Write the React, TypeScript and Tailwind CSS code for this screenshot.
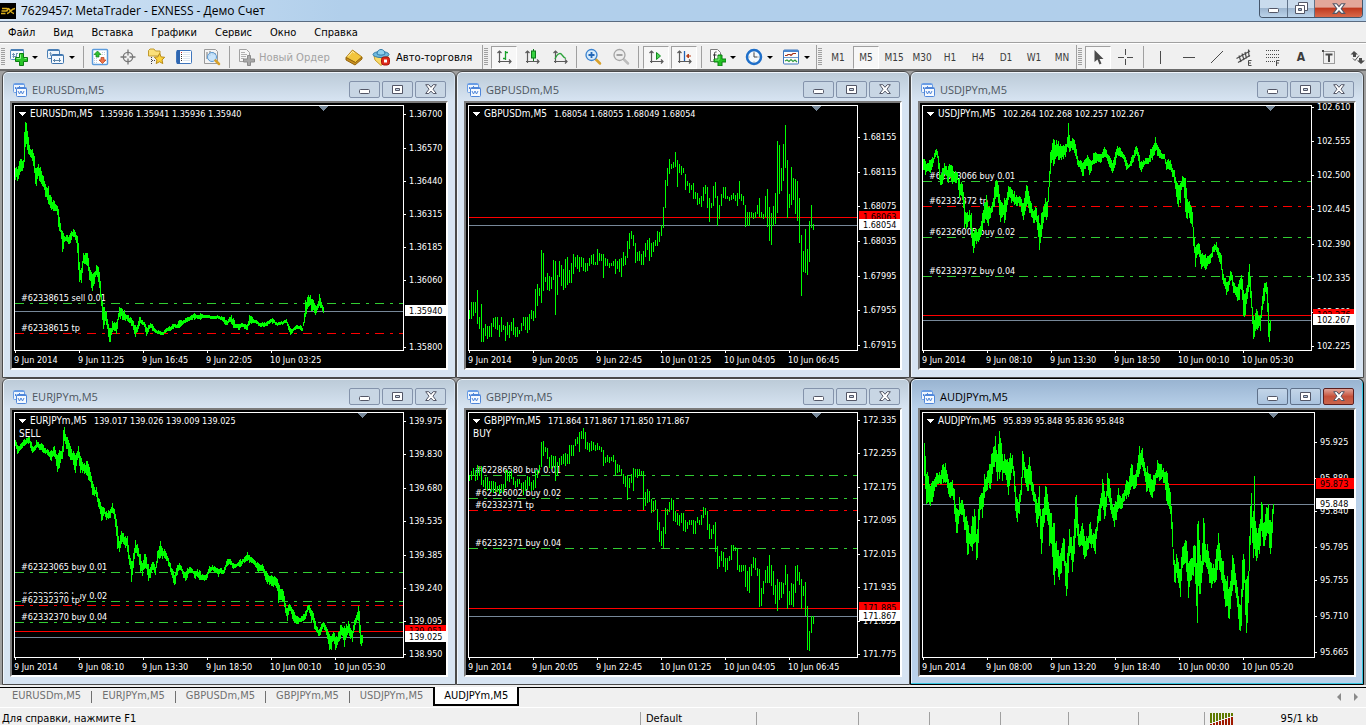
import React from 'react';

type Order = { y: number; text: string; kind: 'open' | 'tp'; cover?: boolean };
type Tag = { y: number; text: string };

interface Chart {
  symbol: string;
  quotes: string;
  signal?: string;
  active?: boolean;
  dense: boolean;
  // where the series data starts counting from, in pixels
  origin: [number, number];
  right?: number;
  marker: number;
  ticks: [number, string][];
  dates: string[];
  orders: Order[];
  ask?: Tag;
  bid: Tag;
  series: string;
}

// Series values are stored in thirds of a pixel.
// Sparse charts: "high,low" every 2px. Dense charts: "x,high,low" key bars.
const SCALE = 3;

const EURUSD = `45,293,330 52,296,332 59,267,305 65,274,305 70,270,290 71,195,290 76,148,215 82,190,245 88,232,256 95,236,266 101,250,300 107,296,356 113,282,315 119,285,335 125,315,348 131,318,350 134,340,378 143,345,400 151,380,417 160,390,425 163,400,430 170,405,425 174,418,470 181,465,490 187,485,557 191,500,515 200,495,515 206,497,525 212,485,512 218,474,500 224,485,505 230,490,530 234,520,600 238,590,648 243,595,640 248,550,580 255,549,582 263,555,595 267,590,630 275,612,665 283,605,640 289,580,610 294,590,635 300,632,680 304,680,720 308,710,782 313,710,760 318,722,765 322,740,790 326,775,818 331,775,815 337,750,780 343,757,785 349,755,795 353,735,755 357,711,740 365,717,750 373,722,750 380,735,752 390,740,760 398,750,775 404,765,805 411,765,785 418,738,765 425,750,765 432,757,770 438,770,798 445,765,785 451,758,770 457,764,785 464,778,790 473,780,792 486,785,795 495,776,788 505,770,783 517,760,778 530,765,772 535,750,776 547,752,765 555,743,758 565,742,752 575,735,750 581,727,750 590,735,745 600,730,750 612,736,743 625,735,745 640,738,744 652,736,745 665,740,750 673,742,765 680,755,765 687,740,755 693,736,762 702,750,775 708,763,775 716,762,783 724,758,770 731,762,775 740,765,782 747,735,765 752,738,762 760,748,760 770,752,762 778,760,770 790,758,770 800,755,768 810,748,760 817,742,762 824,755,762 833,757,764 850,752,760 858,746,760 864,762,780 869,775,796 876,776,790 881,772,781 890,764,778 896,768,776 902,765,782 907,775,782 910,740,770 915,690,740 920,682,720 925,675,710 929,672,700 934,690,730 939,690,720 944,705,738 952,700,716 958,667,708 963,695,715 969,712,730`;

const USDJPY = `45,268,300 49,270,310 52,280,318 55,280,298 61,278,305 66,270,308 72,262,290 76,260,275 80,240,262 85,237,255 89,250,285 93,280,330 97,315,348 103,290,340 107,278,310 115,290,320 119,290,342 125,284,315 131,287,342 140,303,342 147,310,330 152,322,385 158,335,375 163,345,395 168,390,475 173,430,480 178,425,470 184,418,450 189,430,500 194,490,555 199,480,530 205,478,520 212,478,512 217,465,500 222,430,480 228,400,460 234,376,450 240,410,468 246,415,445 252,395,425 258,350,410 265,325,375 270,345,400 275,390,460 282,400,440 289,382,463 295,385,420 300,347,390 305,350,378 310,358,405 317,362,405 323,375,410 332,375,405 338,385,420 344,405,455 349,380,430 353,342,410 358,350,400 363,378,430 369,398,440 377,420,460 384,413,455 390,435,500 394,470,545 399,430,500 405,410,460 409,380,445 415,400,450 419,370,420 422,310,390 425,250,320 431,220,268 437,210,285 444,210,260 451,215,272 458,228,270 464,225,268 470,225,262 476,215,250 479,148,230 484,205,250 491,205,240 497,206,245 502,225,262 507,258,285 515,270,295 523,280,320 530,270,298 536,252,285 544,270,318 550,272,300 556,245,280 562,246,278 570,252,276 580,252,276 587,228,260 595,240,265 602,255,290 608,268,303 614,275,305 621,245,285 627,228,255 634,232,258 642,245,265 650,256,285 655,275,305 662,285,290 668,262,290 675,255,275 680,230,260 686,230,252 692,250,290 698,275,307 705,270,290 713,265,283 720,265,282 725,238,275 731,232,272 737,225,258 742,196,240 746,222,256 752,235,262 760,250,268 768,252,268 774,275,300 780,268,298 786,270,300 792,293,320 798,300,340 803,330,375 810,345,412 816,340,400 820,325,360 826,320,350 831,325,425 836,388,447 842,390,440 846,405,460 852,425,470 856,480,550 861,530,590 866,522,555 873,522,560 878,550,600 885,555,588 892,552,602 898,560,585 905,555,583 912,530,560 917,525,545 923,513,543 929,530,560 933,545,575 939,555,600 943,610,645 950,620,650 955,640,683 961,630,660 965,604,635 970,605,630 975,635,670 982,650,675 988,650,698 993,630,690 998,612,650 1003,630,700 1006,680,752 1012,665,730 1018,640,680 1021,570,660 1026,620,685 1031,680,740 1034,740,812 1040,735,785 1045,712,775 1050,735,775 1056,735,782 1060,700,745 1064,660,705 1069,635,690 1073,630,655 1077,650,725 1080,700,800 1083,760,815 1087,750,770`;

const EURJPY = `45,192,210 50,205,234 56,212,225 62,202,220 70,192,210 77,188,205 87,182,200 92,195,225 97,212,232 103,210,225 108,193,215 113,198,215 120,203,222 127,205,228 134,215,232 142,220,236 152,225,257 158,212,240 163,210,245 170,240,288 176,222,280 180,225,260 186,210,250 188,165,240 192,153,195 197,180,215 203,190,240 208,205,245 214,220,255 220,225,270 224,240,300 229,230,262 234,210,245 239,235,290 245,258,290 251,262,294 257,253,295 265,265,315 272,295,330 277,320,362 283,335,360 289,333,365 295,372,400 299,375,405 304,395,444 310,392,415 317,405,432 324,402,430 330,400,425 335,380,410 341,393,420 346,418,460 351,450,518 356,500,533 362,465,505 368,468,500 374,480,515 380,472,520 385,515,555 390,545,580 394,560,626 399,530,575 405,492,530 409,500,540 415,520,545 420,535,588 426,560,600 431,533,580 437,540,570 443,560,615 449,575,610 454,560,585 461,560,590 466,575,600 471,525,560 476,515,550 480,495,545 485,515,550 492,518,545 498,530,555 504,545,570 511,565,590 518,580,618 523,600,630 530,570,600 536,560,580 543,570,585 548,585,605 555,588,615 562,573,603 569,573,590 577,580,592 583,585,610 590,580,603 598,583,612 606,595,612 613,598,616 620,590,608 627,570,590 636,567,582 643,570,590 654,580,602 660,575,592 668,583,595 673,572,585 680,548,570 690,550,568 698,560,578 706,563,575 713,560,570 719,550,575 726,550,565 733,543,560 742,525,553 748,540,562 755,545,560 763,553,567 772,560,588 780,568,585 787,563,585 794,585,608 800,590,625 806,600,625 812,595,630 818,602,632 824,603,630 830,605,635 834,620,680 839,640,672 846,640,675 851,655,685 855,680,712 860,700,740 865,685,712 871,688,705 877,700,735 884,715,742 892,722,744 900,725,738 908,715,735 915,705,728 920,690,710 926,684,705 932,700,738 938,708,735 943,730,765 950,750,770 956,762,783 962,745,770 968,738,752 974,745,762 980,758,785 987,775,822 993,780,822 998,765,790 1006,785,825 1013,772,800 1020,748,790 1026,752,780 1033,750,818 1038,745,785 1045,732,770 1050,755,790 1056,765,797 1061,735,765 1067,720,740 1074,690,735 1077,705,770 1081,765,820 1087,780,798`;

const AUDJPY = `48,200,300 51,240,340 54,295,385 58,290,370 63,325,385 68,320,380 74,318,370 79,305,340 86,290,325 92,290,320 98,285,325 104,264,322 111,262,320 117,295,335 122,320,365 128,318,360 133,312,360 139,345,425 143,395,470 148,400,470 153,362,420 158,370,415 164,378,430 169,405,470 174,420,500 179,440,545 183,470,505 188,458,508 192,420,525 198,400,500 203,440,545 206,480,560 210,400,500 214,325,425 219,352,400 223,350,437 228,295,365 233,310,345 238,278,340 243,265,335 248,240,330 254,212,275 259,210,272 262,178,265 267,235,315 273,165,310 278,190,270 283,245,325 287,230,290 293,250,300 299,262,365 305,230,320 311,230,270 317,270,330 321,330,405 326,370,443 332,360,420 338,330,375 343,200,290 347,255,300 353,280,330 358,280,350 363,243,325 369,285,345 374,320,370 380,345,400 386,390,460 393,330,420 397,400,533 402,400,500 407,375,450 412,318,410 418,360,440 423,400,510 428,398,490 433,465,555 438,440,626 443,490,570 449,518,600 454,545,615 459,515,590 464,484,550 468,490,570 473,570,665 477,530,640 483,460,540 488,475,540 492,510,587 497,450,550 502,342,470 506,375,470 511,460,518 517,465,510 522,440,510 528,480,548 534,480,540 540,480,520 545,430,500 549,460,515 555,470,515 561,460,533 565,430,495 570,400,440 577,360,435 583,298,380 588,345,430 592,360,420 597,290,360 602,300,370 607,345,410 613,390,430 619,385,458 625,375,425 631,328,395 637,365,400 643,350,395 649,340,370 655,305,370 661,320,360 667,268,340 672,268,330 677,300,340 683,290,335 689,245,305 694,200,290 698,225,265 703,215,275 708,258,300 713,295,350 718,262,345 722,290,345 730,310,365 737,300,350 742,290,320 747,252,305 753,265,315 759,265,310 765,275,320 770,290,330 775,282,385 780,320,390 785,335,400 789,390,460 793,450,545 796,535,615 800,575,630 804,535,590 809,550,610 815,590,680 820,530,600 826,505,560 831,492,560 836,512,600 840,560,665 845,550,615 850,545,610 855,510,600 860,492,600 864,560,690 867,445,740 871,455,640 875,530,665 880,560,610 886,400,560 891,505,560 897,505,580 903,545,620 909,560,635 914,565,615 920,560,620 925,510,610 929,462,545 934,510,590 940,552,615 946,555,650 951,610,692 957,600,690 962,640,740 967,610,690 971,535,650 976,550,620 981,590,650 986,622,680 990,660,730 994,700,806 999,640,750 1003,535,650 1008,550,620 1013,610,780 1017,600,740 1022,540,640 1025,400,560 1028,315,460 1031,390,480 1034,440,555 1038,300,520 1042,430,560 1047,470,545 1052,450,540 1056,430,510 1060,360,490 1065,440,510 1070,420,495 1075,385,475 1080,385,475 1084,430,535 1088,450,530 1092,400,470 1095,385,415`;

const GBPUSD = `720,747 696,747 696,738 696,729 660,762 741,777 702,816 774,816 762,798 768,807 768,801 759,801 744,771 741,777 741,780 765,801 741,786 765,780 768,813 756,795 765,804 756,783 744,795 771,801 771,801 780,792 759,783 741,768 741,780 741,789 732,780 720,747 723,753 657,744 642,708 654,678 540,699 549,663 621,636 609,660 618,663 621,657 570,630 573,735 615,675 573,621 585,648 597,660 567,654 561,645 600,639 579,639 552,612 561,591 555,597 561,606 561,591 564,603 579,606 579,603 564,588 555,582 552,585 576,585 537,585 549,573 552,573 552,624 564,588 567,588 579,594 579,588 573,588 567,612 573,597 567,606 564,621 546,588 558,585 513,564 489,537 483,507 495,528 519,579 546,573 543,573 552,585 543,585 519,561 510,540 504,573 519,561 516,546 510,528 483,528 486,516 465,498 411,474 330,414 294,348 267,312 282,297 276,294 246,291 270,351 282,309 288,315 294,309 312,360 333,348 339,369 345,360 339,387 366,387 369,405 384,402 378,411 351,393 345,372 351,414 384,456 399,414 348,408 336,384 378,468 405,447 372,408 351,384 351,387 378,387 381,393 375,390 369,387 375,393 369,408 333,387 372,393 378,405 405,471 426,468 426,468 426,444 429,447 426,444 405,432 384,441 426,444 432,447 378,441 357,471 411,513 429,525 408,468 369,462 213,429 225,372 294,363 222,333 165,294 270,444 372,414 291,405 324,390 327,432 333,453 384,519 495,678 543,606 477,609 537,615 453,576 405,474 462,480`;

const GBPJPY = `297,315 285,312 276,297 282,315 267,312 273,300 270,327 312,333 303,339 303,345 315,339 315,348 315,351 318,348 330,348 327,354 324,351 324,348 282,336 282,315 285,318 285,309 303,327 315,336 309,333 309,324 321,339 318,357 312,345 300,342 303,330 318,345 312,342 282,336 282,306 267,291 198,273 195,240 213,228 216,249 243,276 237,279 240,273 240,315 258,300 246,270 240,267 234,264 231,270 234,264 207,264 207,240 207,240 189,210 183,204 168,228 165,189 156,189 168,219 198,222 201,228 195,225 198,222 207,225 201,222 210,222 213,228 222,270 243,261 237,258 243,261 243,255 237,258 252,297 264,291 267,288 279,300 294,324 300,333 297,372 306,336 294,321 276,345 279,303 279,306 279,300 285,300 285,402 348,390 339,381 345,378 369,411 375,408 372,402 399,462 438,498 465,510 453,516 396,474 399,417 378,408 366,402 372,435 405,438 411,447 417,450 411,441 411,465 432,468 438,459 432,447 432,447 432,474 435,474 423,441 432,447 417,447 393,426 396,417 405,462 444,489 459,489 447,474 438,528 510,579 540,573 525,555 528,573 546,588 546,582 540,555 507,552 507,525 513,525 516,582 567,588 567,588 567,585 567,633 585,645 573,651 564,600 543,576 546,582 576,600 579,693 636,690 615,654 582,621 570,621 537,621 567,630 585,657 627,684 609,705 618,672 618,666 621,654 567,627 594,699 645,687 621,687 624,693 570,651 567,615 588,627 609,699 630,660 618,720 690,822 765,825 720,771 720,744`;

const charts: Chart[] = [
  {
    symbol: 'EURUSDm,M5',
    quotes: '1.35936 1.35941 1.35936 1.35940',
    dense: true,
    origin: [12, 33],
    marker: 311,
    ticks: [[11, '1.36700'], [45, '1.36570'], [78, '1.36440'], [111, '1.36315'], [144, '1.36185'], [177, '1.36060'], [244, '1.35800']],
    dates: ['9 Jun 2014', '9 Jun 11:25', '9 Jun 16:45', '9 Jun 22:05', '10 Jun 03:25'],
    orders: [
      { y: 200, text: '#62338615 sell 0.01', kind: 'open' },
      { y: 230, text: '#62338615 tp', kind: 'tp' },
    ],
    bid: { y: 208, text: '1.35940' },
    series: EURUSD,
  },
  {
    symbol: 'GBPUSDm,M5',
    quotes: '1.68054 1.68055 1.68049 1.68054',
    dense: false,
    origin: [10, 33],
    marker: 350,
    ticks: [[34, '1.68155'], [69, '1.68115'], [103, '1.68075'], [138, '1.68035'], [173, '1.67995'], [207, '1.67955'], [242, '1.67915']],
    dates: ['9 Jun 2014', '9 Jun 20:05', '9 Jun 22:45', '10 Jun 01:25', '10 Jun 04:05', '10 Jun 06:45'],
    orders: [],
    ask: { y: 114, text: '1.68063' },
    bid: { y: 122, text: '1.68054' },
    series: GBPUSD,
  },
  {
    symbol: 'USDJPYm,M5',
    quotes: '102.264 102.268 102.257 102.267',
    dense: true,
    origin: [12, 33],
    marker: 350,
    ticks: [[4, '102.610'], [38, '102.555'], [72, '102.500'], [106, '102.445'], [141, '102.390'], [175, '102.335'], [209, '102.280'], [243, '102.225']],
    dates: ['9 Jun 2014', '9 Jun 08:10', '9 Jun 13:30', '9 Jun 18:50', '10 Jun 00:10', '10 Jun 05:30'],
    orders: [
      { y: 78, text: '#62323066 buy 0.01', kind: 'open' },
      { y: 103, text: '#62332372 tp', kind: 'tp' },
      { y: 134, text: '#62326005 buy 0.02', kind: 'open' },
      { y: 173, text: '#62332372 buy 0.04', kind: 'open' },
    ],
    ask: { y: 212, text: '102.276' },
    bid: { y: 217, text: '102.267' },
    series: USDJPY,
  },
  {
    symbol: 'EURJPYm,M5',
    quotes: '139.017 139.026 139.009 139.025',
    signal: 'SELL',
    dense: true,
    origin: [12, 34],
    marker: 350,
    ticks: [[11, '139.975'], [44, '139.830'], [78, '139.680'], [111, '139.535'], [145, '139.385'], [178, '139.240'], [211, '139.095'], [244, '138.950']],
    dates: ['9 Jun 2014', '9 Jun 08:10', '9 Jun 13:30', '9 Jun 18:50', '10 Jun 00:10', '10 Jun 05:30'],
    orders: [
      { y: 162, text: '#62323065 buy 0.01', kind: 'open' },
      { y: 191, text: '#62325999 buy 0.02', kind: 'open' },
      { y: 195, text: '#62332370 tp', kind: 'tp', cover: true },
      { y: 212, text: '#62332370 buy 0.04', kind: 'open' },
    ],
    ask: { y: 221, text: '139.051' },
    bid: { y: 227, text: '139.025' },
    series: EURJPY,
  },
  {
    symbol: 'GBPJPYm,M5',
    quotes: '171.864 171.867 171.850 171.867',
    signal: 'BUY',
    dense: false,
    origin: [10, 34],
    marker: 350,
    ticks: [[10, '172.335'], [43, '172.255'], [77, '172.175'], [110, '172.095'], [144, '172.015'], [177, '171.935'], [211, '171.855'], [244, '171.775']],
    dates: ['9 Jun 2014', '9 Jun 20:05', '9 Jun 22:45', '10 Jun 01:25', '10 Jun 04:05', '10 Jun 06:45'],
    orders: [
      { y: 65, text: '#62286580 buy 0.01', kind: 'open' },
      { y: 88, text: '#62326002 buy 0.02', kind: 'open' },
      { y: 100, text: '#62332371 tp', kind: 'tp' },
      { y: 138, text: '#62332371 buy 0.04', kind: 'open' },
    ],
    ask: { y: 198, text: '171.885' },
    bid: { y: 206, text: '171.867' },
    series: GBPJPY,
  },
  {
    symbol: 'AUDJPYm,M5',
    quotes: '95.839 95.848 95.836 95.848',
    active: true,
    dense: true,
    origin: [12, 34],
    right: 394,
    marker: 353,
    ticks: [[32, '95.925'], [68, '95.880'], [101, '95.840'], [137, '95.795'], [170, '95.755'], [206, '95.710'], [242, '95.665']],
    dates: ['9 Jun 2014', '9 Jun 08:00', '9 Jun 13:20', '9 Jun 18:40', '10 Jun 00:00', '10 Jun 05:20'],
    orders: [],
    ask: { y: 74, text: '95.873' },
    bid: { y: 94, text: '95.848' },
    series: AUDJPY,
  },
];

// small repeatable noise so that the bars between two key bars look uneven
const noise = (n: number) => {
  const v = Math.sin(n * 12.9898) * 43758.5453;
  return v - Math.floor(v);
};

const buildPath = (chart: Chart): string => {
  const [ox, oy] = chart.origin;
  const rows = chart.series.split(' ').map((s) => s.split(',').map(Number));
  if (!chart.dense) {
    return rows
      .map(([hi, lo], i) => `M${3 + i * 2} ${Math.round(hi / SCALE) - oy}h1V${Math.round(lo / SCALE) - oy}h-1z`)
      .join('');
  }
  const out: string[] = [];
  let k = 0;
  const last = rows[rows.length - 1][0];
  for (let x = rows[0][0]; x <= last; x += SCALE) {
    while (k < rows.length - 2 && rows[k + 1][0] <= x) k++;
    const [x0, h0, l0] = rows[k];
    const [x1, h1, l1] = rows[k + 1];
    const t = Math.min(1, (x - x0) / (x1 - x0));
    let hi = h0 + (h1 - h0) * t;
    let lo = l0 + (l1 - l0) * t;
    const range = lo - hi;
    if (t > 0.25 && t < 0.8) {
      hi += range * 0.4 * (noise(x) - 0.3);
      lo -= range * 0.4 * (noise(x + 7) - 0.3);
    }
    const top = Math.round(hi / SCALE) - oy;
    const bottom = Math.max(top + 3, Math.round(lo / SCALE) - oy);
    out.push(`M${Math.round(x / SCALE) - ox} ${top}h1V${bottom}h-1z`);
  }
  return out.join('');
};

const ChartPlot: React.FC<{ chart: Chart }> = ({ chart }) => {
  const right = chart.right ?? 391;
  return (
    <svg viewBox="0 0 434 265" className="block w-full bg-black text-[9px]" shapeRendering="crispEdges" role="img" aria-label={chart.symbol}>
      {chart.ask && <path d={`M3 ${chart.ask.y}H${right}v1H3z`} fill="#ff0000" />}
      <path d={`M3 ${chart.bid.y}H${right}v1H3z`} fill="#778899" />
      {chart.orders.map((o) => (
        <line
          key={o.y}
          x1="3"
          x2={right}
          y1={o.y + 0.5}
          y2={o.y + 0.5}
          stroke={o.kind === 'open' ? '#32cd32' : '#ff0000'}
          strokeDasharray="9 6 3 6"
        />
      ))}
      {chart.orders.map((o) => (
        <g key={o.text}>
          {o.cover && <rect x="9" y={o.y - 11} width="59" height="10" fill="#000" />}
          <text x="9" y={o.y - 2} fill="#fff">{o.text}</text>
        </g>
      ))}
      <path d={buildPath(chart)} fill="#00ff00" />
      <path d="M6 9h8l-4 4z" fill="#fff" />
      <text x="18" y="14" fill="#fff">
        <tspan className="text-[10px]">{chart.symbol}</tspan>
        <tspan dx="7">{chart.quotes}</tspan>
      </text>
      {chart.signal && <text x="7" y="27" fill="#fff" className="text-[10px]">{chart.signal}</text>}
      <path d={`M${chart.marker - 4} 3h9l-4 5h-1z`} fill="#778899" />
      <rect x="2.5" y="2.5" width={right - 2} height="245" fill="none" stroke="#fff" />
      {chart.ticks.map(([y, label]) => (
        <g key={label} fill="#fff">
          <rect x={right + 1} y={y} width="2" height="1" />
          <text x={right + 6} y={y + 3}>{label}</text>
        </g>
      ))}
      {chart.dates.map((d, i) => (
        <g key={d} fill="#fff">
          <rect x={3 + i * 64} y="248" width="1" height="2" />
          <text x={2 + i * 64} y="260">{d}</text>
        </g>
      ))}
      {chart.ask && (
        <g>
          <rect x={right + 2} y={chart.ask.y - 6} width="41" height="11" fill="#ff0000" />
          <text x={right + 6} y={chart.ask.y + 3} fill="#000">{chart.ask.text}</text>
        </g>
      )}
      <rect x={right + 2} y={chart.bid.y - 6} width="41" height="11" fill="#fff" />
      <text x={right + 6} y={chart.bid.y + 3} fill="#000">{chart.bid.text}</text>
    </svg>
  );
};

const WindowIcon = () => (
  <svg width="14" height="14" viewBox="0 0 14 14" fill="none" stroke="#4f86d9">
    <rect x="0.5" y="0.5" width="11" height="9" rx="1" fill="#eef5fd" stroke="#6a9de4" />
    <path d="M1 1.5h10" stroke="#6a9de4" />
    <path d="M2.5 6v-2M4.5 7v-2M6.5 5v-2" />
    <rect x="3.5" y="4.5" width="10" height="9" rx="1" fill="#f6faff" />
    <path d="M4 5.5h9" />
    <path d="M5 8l1.500 3 1.500-3 1.500 3 1.500-3" />
  </svg>
);

const MinGlyph = () => (
  <svg width="12" height="12" viewBox="0 0 12 12"><rect x="0.5" y="5.5" width="10" height="4" rx="1" fill="#fff" stroke="#535666" /></svg>
);
const MaxGlyph = () => (
  <svg width="12" height="12" viewBox="0 0 12 12" stroke="#535666" fillRule="evenodd">
    <path d="M0.5 1.5h10v8h-10zM3.5 4.5v2h4v-2z" fill="#fff" />
  </svg>
);
const CloseGlyph: React.FC<{ big?: boolean }> = ({ big }) => (
  <svg width={big ? 14 : 12} height={big ? 12 : 11} viewBox="0 0 12 11">
    <path d="M0.7 0.7h3.1L6 3.3 8.200.7h3.100L8 5.200l3.300 4.300H8.200L6 7.100 3.800 9.500H0.700L4 5.200z" fill="#fff" stroke="#535666" />
  </svg>
);

const glyphs = [
  { label: 'Minimize', node: <MinGlyph /> },
  { label: 'Maximize', node: <MaxGlyph /> },
  { label: 'Close', node: <CloseGlyph /> },
];

const ChartWindow: React.FC<{ chart: Chart }> = ({ chart }) => {
  const active = chart.active;
  return (
    <section
      className={`rounded-t-md border px-[7px] pb-[7px] ${
        active
          ? 'border-black bg-[#b9d1ea] shadow-[inset_-1px_-1px_0_#35c5e0,inset_1px_1px_0_#e8f2fb]'
          : 'border-[#4a4a4a] bg-[#d7e4f2] shadow-[inset_1px_1px_0_#eff5fb]'
      }`}
    >
      <header
        className={`-mx-[6px] mt-px flex h-7 items-center gap-[5px] rounded-t pt-[5px] pr-2 pl-[9px] ${
          active ? 'bg-linear-to-b from-[#99b4d1] to-[#b9d1ea]' : 'bg-linear-to-b from-[#bccbd8] to-[#d7e4f2]'
        }`}
      >
        <WindowIcon />
        <h2 className={`flex-1 font-['Open_Sans',sans-serif] text-[11px] leading-4 ${active ? 'text-black' : 'text-[#4d5660]'}`}>
          {chart.symbol}
        </h2>
        <div className="flex gap-[2px]">
          {glyphs.map((g) => (
            <button
              key={g.label}
              aria-label={g.label}
              className={`flex h-[17px] w-[31px] items-center justify-center rounded-xs border ${
                active && g.label === 'Close'
                  ? 'border-[#5b1f1f] bg-linear-to-b from-[#e0a297] via-[#c5503a] to-[#c9654c]'
                  : active
                    ? 'border-[#5f718a] bg-linear-to-b from-[#c3d5e8] to-[#aac3de]'
                    : 'border-[#8493ab] bg-[#c8d6e4]'
              }`}
            >
              {g.node}
            </button>
          ))}
        </div>
      </header>
      <div className="border-2 border-t-[#7b7b7b] border-r-white border-b-white border-l-[#7b7b7b]">
        <ChartPlot chart={chart} />
      </div>
    </section>
  );
};

/* ---------- toolbar icons, all on an 18x18 grid ---------- */

const Svg: React.FC<{ children: React.ReactNode }> = ({ children }) => (
  <svg width="18" height="18" viewBox="0 0 18 18" fill="none" className="shrink-0">
    {children}
  </svg>
);

const NewChartIcon = () => (
  <Svg>
    <rect x="0.500" y="1.500" width="13" height="10" rx="1" fill="#f4f9fe" stroke="#5b8fc4" />
    <path d="M1 2h12.500" stroke="#4a7fb5" strokeWidth="2" />
    <path d="M3.500 5v5M2 6.500h3M2.500 8.500h4M6.500 5v4M6 5.500h2" stroke="#6f93b3" />
    <path d="M9.500 5.500h4v4h4v4h-4v4h-4v-4h-4v-4h4z" fill="#28c428" stroke="#0b7d12" />
    <path d="M10.500 6.500v4h-4M14.500 10.500h2" stroke="#8ff58a" />
  </Svg>
);
const ProfilesIcon = () => (
  <Svg>
    <rect x="0.500" y="1.500" width="12" height="9" rx="1" fill="#eef5fc" stroke="#4a7fb5" />
    <path d="M1 2.500h11" stroke="#4a7fb5" strokeWidth="1" />
    <path d="M3.500 4v4M2.500 5.500h2" stroke="#7f9fbd" />
    <rect x="4.500" y="6.500" width="12" height="9" rx="1" fill="#f4f9ff" stroke="#3c73ad" />
    <path d="M5 7.500h11" stroke="#4a7fb5" />
    <path d="M6 12.500h8M12.500 10v4M7.500 14v-3" stroke="#5f86a8" />
  </Svg>
);
const MarketIcon = () => (
  <Svg>
    <rect x="1.500" y="1.500" width="15" height="15" rx="1" fill="#fff" stroke="#5c9cdd" strokeWidth="1.500" />
    <path d="M11 4.500h4M11 6.500h4M3 10.500h3M3 12.500h4M3 14.500h4" stroke="#c2cedb" strokeDasharray="1 1" />
    <path d="M6.500 3l3.500 3.500H8V9H5V6.500H3z" fill="#2fc22f" stroke="#12801a" strokeWidth="0.700" />
    <path d="M11.500 15.500L8 12h2V9.500h3V12h2z" fill="#f0744a" stroke="#b53d16" strokeWidth="0.700" />
  </Svg>
);
const TargetIcon = () => (
  <Svg>
    <circle cx="9" cy="9" r="4.700" stroke="#777" strokeWidth="1.300" />
    <path d="M9 1.500v6M9 10.500v6M1.500 9h6M10.500 9h6" stroke="#777" strokeWidth="1.300" />
  </Svg>
);
const FavoritesIcon = () => (
  <Svg>
    <path d="M1.500 8V2.500L3 1h4l1.500 2H13v5z" fill="#fbe07a" stroke="#c19a2e" />
    <path d="M4.500 9v7M5 12.500h3" stroke="#444" strokeDasharray="1 1" />
    <path d="M12.500 5.500l1.600 3.400 3.600.4-2.700 2.600.8 3.700-3.300-1.900-3.300 1.900.8-3.700L7.300 9.300l3.600-.4z" fill="#fdd33c" stroke="#b98a14" />
  </Svg>
);
const NavigatorIcon = () => (
  <Svg>
    <rect x="1.500" y="2.500" width="15" height="13" rx="1" fill="#fff" stroke="#3f76bd" />
    <path d="M3.500 2v14" stroke="#2f66b0" strokeWidth="3" />
    <path d="M6 4.500h1M6 6.500h1M6 8.500h1M6 10.500h1M6 12.500h1" stroke="#333" />
    <path d="M8 4.500h7M8 6.500h7M8 8.500h7M8 10.500h7M8 12.500h7" stroke="#dfe7f0" />
    <path d="M6 4.500h1" stroke="#c22" />
  </Svg>
);
const DataWindowIcon = () => (
  <Svg>
    <path d="M1.500 1.500h11l2 2v12h-13z" fill="#f4f4f4" stroke="#9a9a9a" />
    <path d="M4 4v7M7 3v5M10 4v3M12 5v2" stroke="#777" />
    <circle cx="9" cy="9" r="4.500" fill="#bfe0fb" fillOpacity="0.850" stroke="#5b9ad4" />
    <path d="M12.500 12.500l3.500 3.500" stroke="#d8a12b" strokeWidth="2.500" strokeLinecap="round" />
  </Svg>
);
const NewOrderIcon = () => (
  <Svg>
    <path d="M2.500 1.500h7l3 3v9h-10z" fill="#f6f6f6" stroke="#a2a2a2" />
    <path d="M4 4.500h4M4 6.500h6M4 8.500h5M4 10.500h3" stroke="#b0b0b0" />
    <path d="M10.500 7.500h3v3.500h4v3h-4v3.500h-3V14h-4v-3h4z" fill="#a8a8a8" stroke="#8b8b8b" />
  </Svg>
);
const BookIcon = () => (
  <Svg>
    <path d="M1 9.500L7.500 2 17 9l-6.500 5.500z" fill="#f2c53d" stroke="#b5841a" />
    <path d="M1 9.500v2.500l9 5 7-6V9l-6.500 5.500z" fill="#c98f1f" stroke="#94660e" />
    <path d="M3 8.500L7.500 3.500l2 1.500" stroke="#fff3bf" />
  </Svg>
);
const AutoIcon = () => (
  <Svg>
    <path d="M2 8l1 4 6 5.500 6-5.500 1-4z" fill="#f9da69" stroke="#c79e2c" />
    <ellipse cx="9" cy="6.500" rx="8" ry="3" fill="#6fb9df" stroke="#2f7ba8" />
    <path d="M5 6c0-6 8-6 8 0-2 1.500-6 1.500-8 0z" fill="#8fd0ee" stroke="#2f7ba8" />
    <rect x="9.500" y="9" width="8" height="8" rx="2.500" fill="#de2a1b" stroke="#a81408" />
    <rect x="12" y="11.500" width="3" height="3" fill="#fff" />
  </Svg>
);
const Axes = () => (
  <path d="M4.500 15V3M2.500 5l2-2 2 2M3 13.500h13M14 11.500l2 2-2 2" stroke="#5a5a5a" strokeWidth="1.200" />
);
const BarsIcon = () => (
  <Svg>
    <Axes />
    <path d="M10.500 3v9M10.500 4.500H13M8 10.500h2.500" stroke="#18a02a" strokeWidth="1.300" />
  </Svg>
);
const CandlesIcon = () => (
  <Svg>
    <Axes />
    <path d="M10.500 1v12" stroke="#0d7a1b" />
    <rect x="8.500" y="3" width="4" height="7" fill="#35d13f" stroke="#0d7a1b" />
  </Svg>
);
const LineIcon = () => (
  <Svg>
    <Axes />
    <path d="M4 11c3-7 6-6 7-4 1.500 2 2.500 3 4 3.500" stroke="#2aa33a" strokeWidth="1.300" />
  </Svg>
);
const ZoomInIcon = () => (
  <Svg>
    <path d="M12 11.500l4 4" stroke="#d8a12b" strokeWidth="2.500" strokeLinecap="round" />
    <circle cx="7.500" cy="7" r="5.500" fill="#d9ecfb" stroke="#3b83cf" strokeWidth="1.300" />
    <path d="M4.500 7h6M7.500 4v6" stroke="#2468b8" strokeWidth="1.800" />
  </Svg>
);
const ZoomOutIcon = () => (
  <Svg>
    <path d="M12 11.500l4 4" stroke="#bdbdbd" strokeWidth="2.500" strokeLinecap="round" />
    <circle cx="7.500" cy="7" r="5.500" fill="#ededed" stroke="#a5a5a5" strokeWidth="1.300" />
    <path d="M4.500 7h6" stroke="#9a9a9a" strokeWidth="1.800" />
  </Svg>
);
const ScrollIcon = () => (
  <Svg>
    <Axes />
    <path d="M9.500 4.500v7l4-3.500z" fill="#4fd457" stroke="#128a20" />
  </Svg>
);
const ShiftIcon = () => (
  <Svg>
    <Axes />
    <path d="M9.500 3v10" stroke="#2163b5" strokeWidth="1.300" />
    <path d="M16 8h-4M13.500 6L11.500 8l2 2z" fill="#b8401a" stroke="#b8401a" />
  </Svg>
);
const IndicatorIcon = () => (
  <Svg>
    <path d="M2.500 1.500h7l3 3v9h-10z" fill="#fafafa" stroke="#7d7d7d" />
    <path d="M8.500 4c-2-.5-2 1-2 3v4M5 7h3.500" stroke="#333" />
    <path d="M10 7h4v4h4v3h-4v4h-4v-4H6v-3h4z" fill="#22c022" stroke="#0b7d12" />
    <path d="M11 8v4M7 12h4" stroke="#7ff07a" />
  </Svg>
);
const ClockIcon = () => (
  <Svg>
    <circle cx="9" cy="9" r="7" fill="#f4fafe" stroke="#1f6fc9" strokeWidth="2.500" />
    <path d="M9 4.500V9h3.500" stroke="#444" />
    <path d="M9 3.500v1M9 13.500v1M3.500 9h1M13.500 9h1" stroke="#888" />
  </Svg>
);
const TemplateIcon = () => (
  <Svg>
    <rect x="1.500" y="2" width="15" height="14" rx="1" fill="#fdfdfd" stroke="#3f76bd" />
    <path d="M2 3h14" stroke="#4a87cf" strokeWidth="2" />
    <path d="M2 9.500h14" stroke="#6f9bd0" />
    <path d="M3 7.500h2l1-1h2l1 1 2-2h3" stroke="#a3341c" strokeWidth="1.200" />
    <path d="M3 13l2-1 2 1.500 2-2 2 2 2-1.500 2 2" stroke="#2f9a3d" strokeWidth="1.200" />
  </Svg>
);
const CursorIcon = () => (
  <Svg>
    <path d="M5.500 2v12l3-2.500 2 5 2-1-2-4.500h4z" fill="#4b4b4b" />
  </Svg>
);
const CrossIcon = () => (
  <Svg>
    <path d="M8.500 1v6M8.500 11v6M1 9.500h6M10 9.500h6" stroke="#4b4b4b" />
  </Svg>
);
const VLineIcon = () => <Svg><path d="M8.500 3v13" stroke="#4b4b4b" /></Svg>;
const HLineIcon = () => <Svg><path d="M3 9.500h12" stroke="#4b4b4b" /></Svg>;
const TrendIcon = () => <Svg><path d="M3 15L15 3" stroke="#4b4b4b" /></Svg>;
const ChannelIcon = () => (
  <Svg>
    <path d="M0.500 10.500L14 3M2 14.500l12-7M3 7.500L5 14M6 5.500L8 12M9 4l1.500 6.500M12.500 1.500L13 9" stroke="#4b4b4b" strokeWidth="1.200" />
    <path d="M15.500 12.500h-3v5h3M12.500 15h2.500" stroke="#4b4b4b" />
  </Svg>
);
const FiboIcon = () => (
  <Svg>
    <path d="M2 2.500h14M2 6.500h14M2 9.500h14M2 13.500h9" stroke="#4b4b4b" strokeDasharray="1 1" />
    <path d="M15.500 12.500h-3V18M12.500 15h2.500" stroke="#4b4b4b" />
  </Svg>
);
const LabelIcon = () => (
  <Svg>
    <rect x="3.500" y="3.500" width="11" height="12" stroke="#4b4b4b" strokeDasharray="1 1" />
    <path d="M5.500 6.500h7M9 6v8" stroke="#4b4b4b" strokeWidth="2" />
    <rect x="2" y="2" width="2" height="2" fill="#4b4b4b" />
  </Svg>
);
const ArrowsIcon = () => (
  <Svg>
    <path d="M6 3l4 3.500H8V9H5V6.500H2.500zM13 16l-4-3.500h2V10h3v2.500h3z" fill="#4b4b4b" />
    <path d="M5 10.500l2 2 4-5" stroke="#4b4b4b" />
  </Svg>
);

const Caret = () => <span className="border-x-[3px] border-t-[3px] border-x-transparent border-t-black" />;

const Grip = () => (
  <span className="mr-[2px] ml-px h-[18px] w-1 shrink-0 bg-[repeating-linear-gradient(to_bottom,#a0a0a0_0_1px,#efefef_1px_2px)]" />
);

const Sep: React.FC<{ wide?: boolean }> = ({ wide }) => (
  <span className={`flex h-[22px] shrink-0 justify-center ${wide ? 'w-[7px]' : 'w-[5px]'}`}>
    <span className="w-px bg-[#a0a0a0]" />
  </span>
);

interface ToolProps {
  label: string;
  pressed?: boolean;
  children: React.ReactNode;
}

const Tool: React.FC<ToolProps> = ({ label, pressed, children }) => (
  <button aria-label={label} aria-pressed={pressed} className="flex h-6 w-7 shrink-0 items-center justify-center text-[10px] text-[#3c3c3c]">
    <span
      className={`flex h-[23px] w-[26px] items-center justify-center ${
        pressed ? 'border border-t-[#a0a0a0] border-r-white border-b-white border-l-[#a0a0a0] bg-[#f7f7f7]' : ''
      }`}
    >
      {children}
    </span>
  </button>
);

const MenuTool: React.FC<ToolProps> = ({ label, children }) => (
  <button aria-label={label} className="flex h-6 w-[37px] shrink-0 items-center gap-1 pl-[3px]">
    {children}
    <Caret />
  </button>
);

const group = 'flex shrink-0 items-center border-r border-[#a0a0a0]';

const Toolbar = () => (
  <div className="flex h-[26px] items-stretch overflow-hidden border-t border-white pt-px">
    <div className={`${group} w-[483px]`}>
      <Grip />
      <MenuTool label="New chart"><NewChartIcon /></MenuTool>
      <MenuTool label="Profiles"><ProfilesIcon /></MenuTool>
      <Sep />
      <Tool label="Market watch"><MarketIcon /></Tool>
      <Tool label="Data window"><TargetIcon /></Tool>
      <Tool label="Navigator"><FavoritesIcon /></Tool>
      <Tool label="Terminal"><NavigatorIcon /></Tool>
      <Tool label="Strategy tester"><DataWindowIcon /></Tool>
      <Sep wide />
      <button disabled className="flex h-6 w-[107px] shrink-0 items-center gap-1 pl-1 font-['DejaVu_Sans',sans-serif] text-[10px] whitespace-nowrap text-[#a3a3a3]">
        <NewOrderIcon />
        Новый Ордер
      </button>
      <Tool label="MetaEditor"><BookIcon /></Tool>
      <button className="flex h-6 shrink-0 items-center gap-[6px] pl-1 font-['DejaVu_Sans',sans-serif] text-[10px] whitespace-nowrap text-black">
        <AutoIcon />
        Авто-торговля
      </button>
    </div>
    <div className={group}>
      <Grip />
      <Tool label="Bar chart" pressed><BarsIcon /></Tool>
      <Tool label="Candlesticks"><CandlesIcon /></Tool>
      <Tool label="Line chart"><LineIcon /></Tool>
      <Sep />
      <Tool label="Zoom in"><ZoomInIcon /></Tool>
      <Tool label="Zoom out"><ZoomOutIcon /></Tool>
      <Sep wide />
      <Tool label="Auto scroll" pressed><ScrollIcon /></Tool>
      <Tool label="Chart shift" pressed><ShiftIcon /></Tool>
      <Sep wide />
      <MenuTool label="Indicators"><IndicatorIcon /></MenuTool>
      <MenuTool label="Periods"><ClockIcon /></MenuTool>
      <MenuTool label="Templates"><TemplateIcon /></MenuTool>
    </div>
    <div className={group}>
      <Grip />
      {['M1', 'M5', 'M15', 'M30', 'H1', 'H4', 'D1', 'W1', 'MN'].map((p) => (
        <Tool key={p} label={p} pressed={p === 'M5'}>{p}</Tool>
      ))}
    </div>
    <div className="flex items-center">
      <Grip />
      <Tool label="Cursor" pressed><CursorIcon /></Tool>
      <Tool label="Crosshair"><CrossIcon /></Tool>
      <Sep wide />
      <Tool label="Vertical line"><VLineIcon /></Tool>
      <Tool label="Horizontal line"><HLineIcon /></Tool>
      <Tool label="Trendline"><TrendIcon /></Tool>
      <Tool label="Equidistant channel"><ChannelIcon /></Tool>
      <Tool label="Fibonacci retracement"><FiboIcon /></Tool>
      <Tool label="Text"><span className="text-xs font-bold">A</span></Tool>
      <Tool label="Text label"><LabelIcon /></Tool>
      <Tool label="Arrows"><ArrowsIcon /></Tool>
    </div>
  </div>
);

const TitleBar = () => (
  <header className="flex h-[22px] items-start justify-between border-b border-[#5a6b80] bg-linear-to-r from-[#d3e4f5] via-[#b1cfeb] via-25% to-[#b1cfeb]">
    <div className="flex h-[22px] items-center gap-[5px]">
      <svg width="16" height="16" viewBox="0 0 16 16" fill="none" stroke="#d9ae1c" strokeWidth="1.500">
        <rect width="16" height="16" fill="#000" stroke="none" />
        <path d="M1 10.500h4.500M1.500 8h4.500M2 5.500h5c1 0 1 2.500-1 2.500M15 5.500c-4 0-5 5-8 5M8 5.500c2 0 3 5 6 5" />
      </svg>
      <h1 className="font-['Open_Sans',sans-serif] text-xs text-black">7629457: MetaTrader - EXNESS - Демо Счет</h1>
    </div>
    <div className="mr-[3px] flex h-[18px] overflow-hidden rounded-b border border-t-0 border-[#45566b]">
      <button aria-label="Minimize" className="flex w-7 items-center justify-center border-r border-[#5f7289] bg-linear-to-b from-[#c9dbed] from-45% via-[#9db6d0] via-50% to-[#bcd3ea]">
        <MinGlyph />
      </button>
      <button aria-label="Restore" className="flex w-[27px] items-center justify-center border-r border-[#5f7289] bg-linear-to-b from-[#c9dbed] from-45% via-[#9db6d0] via-50% to-[#bcd3ea]">
        <svg width="13" height="13" viewBox="0 0 13 13" fill="#fff" stroke="#535666">
          <path d="M3.500 0.500h9v8h-9z" />
          <path d="M0.500 3.500h9v8h-9z" />
          <path d="M3.500 6.500h3v2h-3z" fill="#9db6d0" />
        </svg>
      </button>
      <button aria-label="Close" className="flex w-[47px] items-center justify-center bg-linear-to-b from-[#e3a79a] from-40% via-[#c03a20] via-50% to-[#d9694a]">
        <CloseGlyph big />
      </button>
    </div>
  </header>
);

const menu = ['Файл', 'Вид', 'Вставка', 'Графики', 'Сервис', 'Окно', 'Справка'];
const tabs = ['EURUSDm,M5', 'EURJPYm,M5', 'GBPUSDm,M5', 'GBPJPYm,M5', 'USDJPYm,M5'];
const statusCells = ['w-[102px]', 'w-[71px]', 'w-[71px]', 'w-[68px]', 'w-[70px]', 'w-[66px]'];

const App: React.FC = () => {
  return (
    <div className="flex min-h-screen flex-col overflow-hidden bg-[#f0f0f0] font-['DejaVu_Sans_Condensed','DejaVu_Sans',sans-serif] text-[11px] text-black">
      <TitleBar />
      <nav className="flex h-[21px] items-center gap-[18px] border-b border-[#a0a0a0] pt-px pl-2">
        {menu.map((m) => (
          <button key={m} className="leading-4">{m}</button>
        ))}
      </nav>
      <Toolbar />
      <main className="grid grid-cols-3 border-t-2 border-[#6b6b6b] bg-[#a0a0a0] px-[2px]">
        {charts.map((c) => (
          <ChartWindow key={c.symbol} chart={c} />
        ))}
      </main>
      <div className="mt-[2px] flex h-[21px] items-start border-t border-b border-t-black border-b-white">
        <div className="flex h-[17px] flex-1 items-center pl-[2px] text-[#707070]">
          {tabs.map((t, i) => (
            <button key={t} className={`flex h-3 items-center px-[10px] ${i < tabs.length - 1 ? 'border-r border-[#707070]' : ''}`}>
              {t}
            </button>
          ))}
          <button className="-mt-px h-[19px] self-start border-2 border-t-0 border-black bg-white px-[9px] pt-px text-black">AUDJPYm,M5</button>
        </div>
        <div className="flex h-[17px] items-center gap-[13px] pr-2">
          <button aria-label="Scroll left" className="border-y-4 border-r-4 border-y-transparent border-r-[#8a8a8a]" />
          <button aria-label="Scroll right" className="border-y-4 border-l-4 border-y-transparent border-l-[#8a8a8a]" />
        </div>
      </div>
      <footer className="flex h-[17px] items-stretch pt-1 leading-[13px]">
        <p className="flex-1 pl-[2px]">Для справки, нажмите F1</p>
        <p className="w-[116px] border-l border-[#a0a0a0] pl-[5px]">Default</p>
        {statusCells.map((w, i) => (
          <span key={i} className={`${w} border-l border-[#a0a0a0]`} />
        ))}
        <div className="flex w-[162px] border-l border-[#a0a0a0] pl-[5px]">
          <svg width="24" height="14" viewBox="0 0 24 14" shapeRendering="crispEdges">
            {[0, 1, 2, 3, 4, 5, 6, 7].map((i) => (
              <g key={i}>
                <rect x={i * 3} y="1" width="2" height={10 - i} fill="#5f7a00" />
                <rect x={i * 3} y={12 - i} width="2" height={i + 2} fill="#a01a00" />
              </g>
            ))}
          </svg>
          <span className="flex-1 pr-12 text-right">95/1 kb</span>
        </div>
      </footer>
    </div>
  );
};

export default App;
